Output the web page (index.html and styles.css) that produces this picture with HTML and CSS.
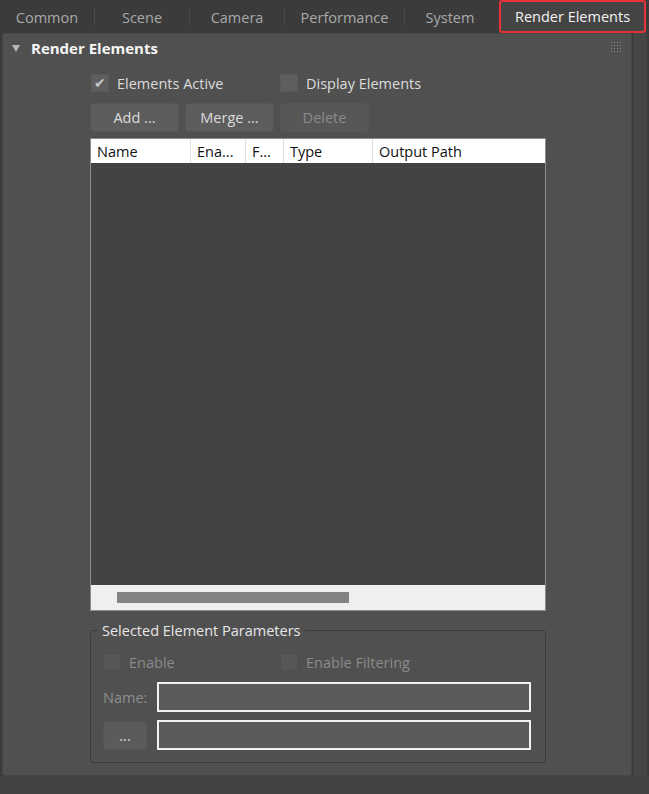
FILE: index.html
```html
<!DOCTYPE html>
<html lang="en">
<head>
    <meta charset="UTF-8">
    <title>Render Setup - Render Elements</title>
    <link rel="stylesheet" href="styles.css">
</head>
<body>
    <div class="tabs">
        <div class="tab" style="width:95px">Common</div>
        <div class="tab" style="width:95px">Scene</div>
        <div class="tab" style="width:95px">Camera</div>
        <div class="tab" style="width:120px">Performance</div>
        <div class="tab last" style="width:90px">System</div>
        <div class="tab active">Render Elements</div>
    </div>
    <div class="main">
        <div class="panel">
            <div class="rollout-head">
                <span class="arrow"></span>
                <span class="rollout-title">Render Elements</span>
                <svg class="grip" width="10" height="10" viewBox="0 0 10 10">
                    <g fill="#8e8e8e">
                        <rect x="0" y="0" width="1" height="1"/><rect x="3" y="0" width="1" height="1"/><rect x="6" y="0" width="1" height="1"/><rect x="9" y="0" width="1" height="1"/>
                        <rect x="0" y="3" width="1" height="1"/><rect x="3" y="3" width="1" height="1"/><rect x="6" y="3" width="1" height="1"/><rect x="9" y="3" width="1" height="1"/>
                        <rect x="0" y="6" width="1" height="1"/><rect x="3" y="6" width="1" height="1"/><rect x="6" y="6" width="1" height="1"/><rect x="9" y="6" width="1" height="1"/>
                        <rect x="0" y="9" width="1" height="1"/><rect x="3" y="9" width="1" height="1"/><rect x="6" y="9" width="1" height="1"/><rect x="9" y="9" width="1" height="1"/>
                    </g>
                </svg>
            </div>
            <div class="content">
                <div class="check-row">
                    <label class="check"><span class="box checked">&#10004;</span>Elements Active</label>
                    <label class="check"><span class="box"></span>Display Elements</label>
                </div>
                <div class="btn-row">
                    <button class="btn">Add ...</button>
                    <button class="btn">Merge ...</button>
                    <button class="btn disabled">Delete</button>
                </div>
                <div class="list">
                    <div class="list-head">
                        <div class="col" style="width:100px">Name</div>
                        <div class="col" style="width:55px">Ena...</div>
                        <div class="col" style="width:38px">F...</div>
                        <div class="col" style="width:89px">Type</div>
                        <div class="col">Output Path</div>
                    </div>
                    <div class="list-body"></div>
                    <div class="hscroll"><div class="thumb"></div></div>
                </div>
                <fieldset class="group">
                    <legend>Selected Element Parameters</legend>
                    <div class="check-row dim">
                        <label class="check"><span class="box"></span>Enable</label>
                        <label class="check"><span class="box"></span>Enable Filtering</label>
                    </div>
                    <div class="field-row">
                        <span class="field-label">Name:</span>
                        <div class="input"></div>
                    </div>
                    <div class="field-row second">
                        <button class="btn small">...</button>
                        <div class="input"></div>
                    </div>
                </fieldset>
            </div>
        </div>
        <div class="vscroll"></div>
    </div>
    <div class="footer"></div>
</body>
</html>
```

FILE: styles.css
```css
body {
    margin: 0;
    padding: 0;
    width: 649px;
    height: 794px;
    overflow: hidden;
    background-color: #3b3b3b;
    font-family: "Open Sans", "Noto Sans", Arial, sans-serif;
    font-size: 14.5px;
    color: #dcdcdc;
    display: flex;
    flex-direction: column;
}
.tabs {
    height: 33px;
    display: flex;
    align-items: center;
    background-color: #3b3b3b;
}
.tab {
    color: #a9a9a9;
    text-align: center;
    height: 18px;
    line-height: 20px;
    border-right: 1px solid #4a4a4a;
    box-sizing: border-box;
}
.tab.last {
    border-right: none;
}
.tab.active {
    margin-left: 4px;
    width: 147px;
    height: 33px;
    line-height: 30px;
    color: #f2f2f2;
    background-color: #444444;
    border: 2px solid #e8323a;
    border-radius: 3px;
}
.main {
    display: flex;
    height: 743px;
}
.panel {
    margin-left: 2px;
    width: 630px;
    background-color: #505050;
    border: 1px solid #474747;
    border-radius: 2px 2px 3px 3px;
    box-sizing: border-box;
    height: 743px;
}
.vscroll {
    width: 12px;
    margin-left: 2px;
    background-color: #464646;
    border-left: 1px solid #4c4c4c;
}
.footer {
    flex: 1;
    background-color: #424242;
}
.rollout-head {
    display: flex;
    align-items: center;
    height: 28px;
    position: relative;
}
.arrow {
    width: 0;
    height: 0;
    margin-left: 9px;
    margin-right: 11px;
    border-left: 4px solid transparent;
    border-right: 4px solid transparent;
    border-top: 7px solid #b5b5b5;
}
.rollout-title {
    font-weight: bold;
    font-size: 15px;
    color: #f5f5f5;
}
.grip {
    position: absolute;
    right: 10px;
    top: 8px;
}
.content {
    padding-left: 87px;
    padding-top: 6px;
    width: 456px;
}
.check-row {
    display: flex;
    height: 30px;
    align-items: center;
    padding-left: 1px;
}
.check {
    display: flex;
    align-items: center;
    width: 189px;
}
.box {
    width: 16px;
    height: 16px;
    background-color: #5e5e5e;
    border: 1px solid #585858;
    margin-right: 8px;
    font-size: 14px;
    line-height: 16px;
    text-align: center;
    color: #c8c8c8;
}
.btn-row {
    display: flex;
    gap: 6px;
    margin-top: 5px;
    height: 29px;
}
.btn {
    width: 89px;
    height: 29px;
    background-color: #5d5d5d;
    border: 1px solid #565656;
    border-radius: 4px;
    color: #dcdcdc;
    font-family: inherit;
    font-size: 14.5px;
    padding: 0;
}
.btn.disabled {
    color: #8a8a8a;
    background-color: #575757;
}
.list {
    margin-top: 6px;
    width: 456px;
    height: 473px;
    border: 1px solid #8c8c8c;
    box-sizing: border-box;
    display: flex;
    flex-direction: column;
}
.list-head {
    display: flex;
    background-color: #ffffff;
    height: 24px;
    color: #111111;
}
.col {
    padding-left: 6px;
    line-height: 26px;
    border-right: 1px solid #e0e0e0;
    box-sizing: border-box;
}
.col:last-child {
    border-right: none;
}
.list-body {
    flex: 1;
    background-color: #434343;
}
.hscroll {
    height: 25px;
    background-color: #efefef;
    display: flex;
    align-items: center;
    padding-left: 26px;
}
.thumb {
    width: 232px;
    height: 11px;
    background-color: #828282;
}
.group {
    margin: 10px 0 0 0;
    padding: 0 13px 0 12px;
    width: 456px;
    height: 142px;
    box-sizing: border-box;
    border: 1px solid #3c3c3c;
    border-radius: 3px;
}
.group legend {
    padding: 0 4px 0 4px;
    margin-left: -5px;
    color: #e6e6e6;
}
.group .check-row {
    padding-left: 0;
    height: 28px;
    margin-top: 8px;
}
.dim {
    color: #8a8a8a;
}
.dim .check {
    width: 177px;
}
.dim .box {
    background-color: #575757;
    border-color: #4e4e4e;
}
.field-row {
    display: flex;
    align-items: center;
    gap: 10px;
    margin-top: 6px;
    height: 30px;
}
.field-row.second {
    margin-top: 8px;
}
.field-label {
    color: #8e8e8e;
    width: 44px;
}
.input {
    width: 374px;
    height: 30px;
    box-sizing: border-box;
    border: 2px solid #f2f2f2;
    background-color: #5a5a5a;
}
.btn.small {
    width: 44px;
    height: 29px;
    background-color: #5b5b5b;
}
```
